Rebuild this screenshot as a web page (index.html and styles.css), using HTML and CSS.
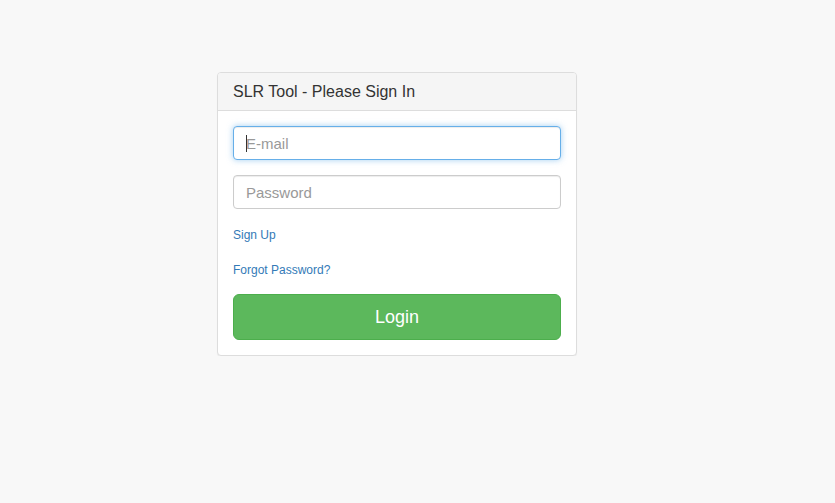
FILE: index.html
```html
<!DOCTYPE html>
<html>
<head>
<meta charset="utf-8">
<title>SLR Tool - Please Sign In</title>
<link rel="stylesheet" href="styles.css">
</head>
<body>
<div class="page">
  <div class="panel">
    <div class="panel-heading">
      <h3 class="panel-title">SLR Tool - Please Sign In</h3>
    </div>
    <div class="panel-body">
      <form class="login-form">
        <div class="form-group">
          <div class="field is-focused">
            <input class="form-control focused" type="email" placeholder="E-mail">
            <span class="caret"></span>
          </div>
        </div>
        <div class="form-group">
          <div class="field">
            <input class="form-control" type="password" placeholder="Password">
          </div>
        </div>
        <div class="link-row"><a href="#">Sign Up</a></div>
        <div class="link-row"><a href="#">Forgot Password?</a></div>
        <button type="button" class="btn-login">Login</button>
      </form>
    </div>
  </div>
</div>
</body>
</html>
```
FILE: styles.css
```css
* { box-sizing: border-box; }
html, body {
  margin: 0;
  padding: 0;
  background: #f8f8f8;
  font-family: "Liberation Sans", Arial, sans-serif;
  color: #333;
  font-size: 14px;
}
.page {
  padding: 72px 0 0 217px;
}
.panel {
  width: 360px;
  background: #fff;
  border: 1px solid #ddd;
  border-radius: 4px;
  box-shadow: 0 1px 1px rgba(0,0,0,.05);
}
.panel-heading {
  background: #f5f5f5;
  border-bottom: 1px solid #ddd;
  border-radius: 3px 3px 0 0;
  padding: 10px 15px;
}
.panel-title {
  margin: 0;
  font-size: 16px;
  font-weight: normal;
  line-height: 17px;
  color: #333;
}
.panel-body {
  padding: 15px;
}
.login-form {
  display: flex;
  flex-direction: column;
}
.form-group {
  margin-bottom: 15px;
}
.field {
  position: relative;
}
.form-control {
  display: block;
  width: 100%;
  height: 34px;
  padding: 6px 12px;
  font-family: "Liberation Sans", Arial, sans-serif;
  font-size: 15px;
  color: #555;
  background: #fff;
  border: 1px solid #ccc;
  border-radius: 4px;
  box-shadow: inset 0 1px 1px rgba(0,0,0,.075);
  outline: none;
}
.form-control::placeholder {
  color: #999;
}
.form-control.focused {
  border-color: #66afe9;
  box-shadow: inset 0 1px 1px rgba(0,0,0,.075), 0 0 6px rgba(102,175,233,.6);
}
.caret {
  position: absolute;
  left: 13px;
  top: 9px;
  width: 1px;
  height: 17px;
  background: #333;
}
.link-row {
  line-height: 20px;
  font-size: 12px;
  padding-top: 1px;
  margin-bottom: 14px;
}
.link-row a {
  color: #337ab7;
  text-decoration: none;
}
.btn-login {
  display: block;
  width: 100%;
  height: 46px;
  padding: 10px 16px;
  font-family: "Liberation Sans", Arial, sans-serif;
  font-size: 18px;
  line-height: 24px;
  color: #fff;
  background: #5cb85c;
  border: 1px solid #4cae4c;
  border-radius: 6px;
  cursor: pointer;
}
```
